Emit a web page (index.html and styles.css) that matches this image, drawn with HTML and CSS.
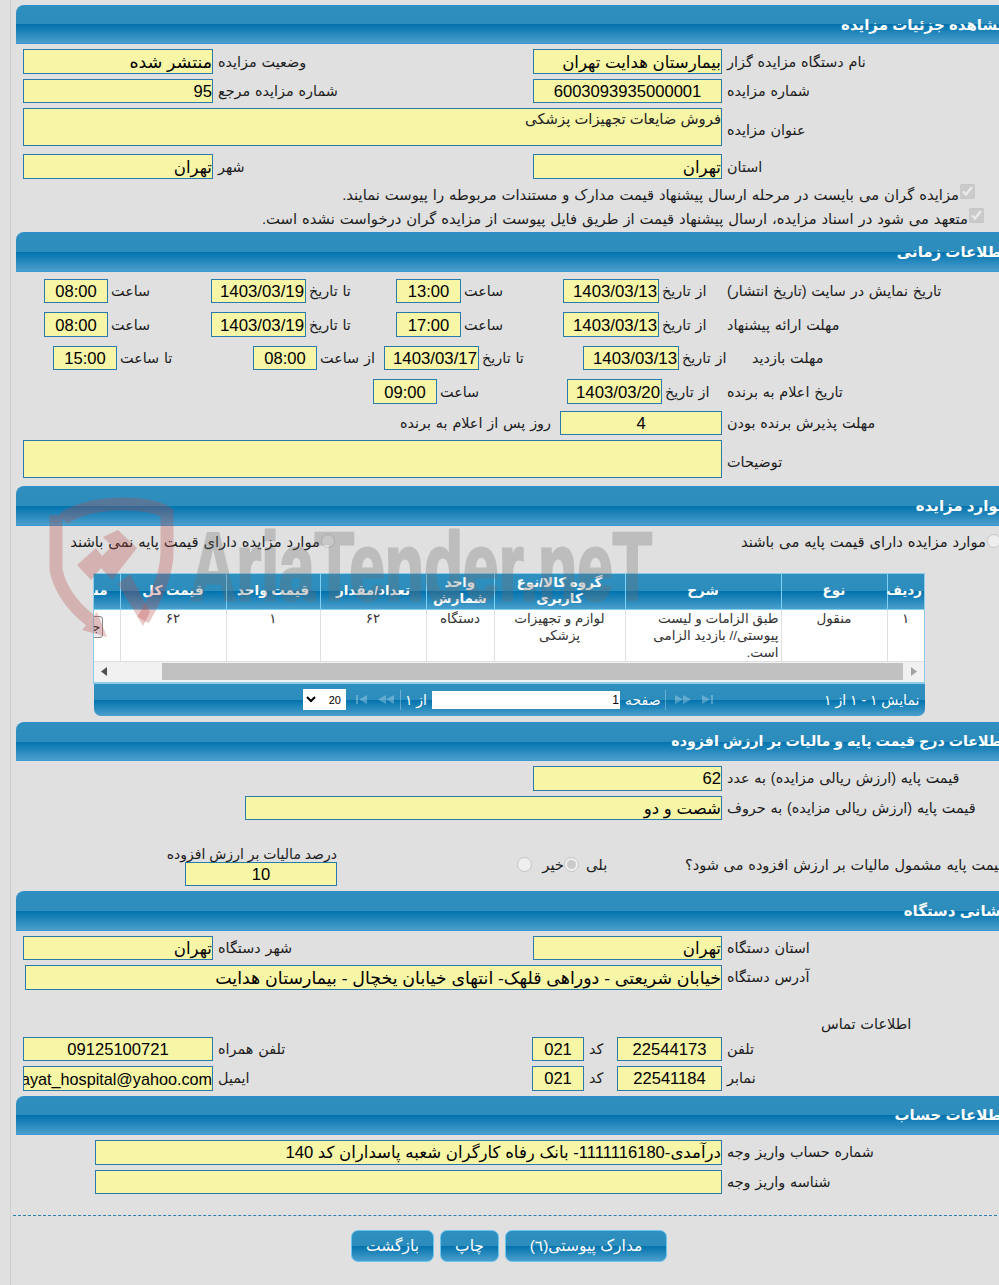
FILE: index.html
```html
<!DOCTYPE html>
<html lang="fa">
<head>
<meta charset="utf-8">
<title>مشاهده جزئیات مزایده</title>
<link rel="stylesheet" href="styles.css">
</head>
<body>
<div class="page">

  <section class="sec">
    <h2 class="bar h39">مشاهده جزئیات مزایده</h2>
    <div class="row two r25 mt5"><div class="f big">منتشر شده</div><div class="lbl">وضعیت مزایده</div><div class="f">بیمارستان هدایت تهران</div><div class="lbl">نام دستگاه مزایده گزار</div></div>
    <div class="row two r24 mt5"><div class="f">95</div><div class="lbl">شماره مزایده مرجع</div><div class="f c">6003093935000001</div><div class="lbl">شماره مزایده</div></div>
    <div class="row wide r38 mt5"><div class="f ta">فروش ضایعات تجهیزات پزشکی</div><div class="lbl low">عنوان مزایده</div></div>
    <div class="row two r25 mt8"><div class="f">تهران</div><div class="lbl">شهر</div><div class="f">تهران</div><div class="lbl">استان</div></div>
    <div class="chk one mt5"><input type="checkbox" checked disabled><span>مزایده گران می بایست در مرحله ارسال پیشنهاد قیمت مدارک و مستندات مربوطه را پیوست نمایند.</span></div>
    <div class="chk two-c mt5"><input type="checkbox" checked disabled><span>متعهد می شود در اسناد مزایده، ارسال پیشنهاد قیمت از طریق فایل پیوست از مزایده گران درخواست نشده است.</span></div>
    <div class="gap5"></div>
  </section>

  <section class="sec">
    <h2 class="bar h40">اطلاعات زمانی</h2>
    <div class="row time r24 mt7"><div class="f c">08:00</div><div class="lbl">ساعت</div><div class="f e">1403/03/19</div><div class="lbl">تا تاریخ</div><div class="f c">13:00</div><div class="lbl">ساعت</div><div class="f e">1403/03/13</div><div class="lbl">از تاریخ</div><div class="lbl">تاریخ نمایش در سایت (تاریخ انتشار)</div></div>
    <div class="row time r25 mt9"><div class="f c">08:00</div><div class="lbl">ساعت</div><div class="f e">1403/03/19</div><div class="lbl">تا تاریخ</div><div class="f c">17:00</div><div class="lbl">ساعت</div><div class="f e">1403/03/13</div><div class="lbl">از تاریخ</div><div class="lbl">مهلت ارائه پیشنهاد</div></div>
    <div class="row visit r24 mt9"><div class="f c">15:00</div><div class="lbl">تا ساعت</div><div class="f c">08:00</div><div class="lbl">از ساعت</div><div class="f e">1403/03/17</div><div class="lbl">تا تاریخ</div><div class="f e">1403/03/13</div><div class="lbl">از تاریخ</div><div class="lbl">مهلت بازدید</div></div>
    <div class="row award r25 mt9"><div class="f c">09:00</div><div class="lbl">ساعت</div><div class="f e">1403/03/20</div><div class="lbl">از تاریخ</div><div class="lbl">تاریخ اعلام به برنده</div></div>
    <div class="row accept r24 mt7"><div class="lbl after">روز پس از اعلام به برنده</div><div class="f c">4</div><div class="lbl">مهلت پذیرش برنده بودن</div></div>
    <div class="row wide r38 mt5"><div class="f"></div><div class="lbl low">توضیحات</div></div>
    <div class="gap8"></div>
  </section>

  <section class="sec">
    <h2 class="bar h40">موارد مزایده</h2>
    <div class="kinds">
      <label class="kind-l"><input type="radio" name="k" disabled><span>موارد مزایده دارای قیمت پایه نمی باشند</span></label>
      <label class="kind-r"><input type="radio" name="k" disabled><span>موارد مزایده دارای قیمت پایه می باشند</span></label>
    </div>
    <div class="grid">
      <table>
        <colgroup><col class="c1"><col class="c2"><col class="c3"><col class="c4"><col class="c5"><col class="c6"><col class="c7"><col class="c8"><col class="c9"></colgroup>
        <thead><tr><th>ردیف</th><th>نوع</th><th>شرح</th><th>گروه کالا/نوع کاربری</th><th>واحد شمارش</th><th>تعداد/مقدار</th><th>قیمت واحد</th><th>قیمت کل</th><th class="th-last">مشاهده</th></tr></thead>
        <tbody><tr><td>۱</td><td>منقول</td><td class="desc">طبق الزامات و لیست پیوستی// بازدید الزامی است.</td><td>لوازم و تجهیزات پزشکی</td><td>دستگاه</td><td>۶۲</td><td>۱</td><td>۶۲</td><td class="td-last"><button class="mini" type="button">جزئیات</button></td></tr></tbody>
      </table>
      <div class="hscroll">
        <svg class="arrow" width="9" height="11" viewBox="0 0 9 11"><path d="M7 1v9L1 5.500z" fill="#505050"/></svg>
        <div class="thumb"></div>
        <svg class="arrow" width="9" height="11" viewBox="0 0 9 11"><path d="M2 1v9l6-4.500z" fill="#a3a3a3"/></svg>
      </div>
    </div>
    <div class="pager">
      <select class="size" disabled><option>20</option></select>
      <svg class="pi first" width="13" height="9" viewBox="0 0 13 9"><path d="M1 0h2v9H1zM12 0v9L4 4.500z"/></svg>
      <svg class="pi prev" width="16" height="9" viewBox="0 0 16 9"><path d="M8 0v9L0 4.500zM16 0v9L8 4.500z"/></svg>
      <i class="sep s1"></i>
      <span class="of">از ۱</span>
      <input class="pg" type="text" value="1" readonly>
      <span class="pl">صفحه</span>
      <i class="sep s2"></i>
      <svg class="pi next" width="16" height="9" viewBox="0 0 16 9"><path d="M0 0v9l8-4.500zM8 0v9l8-4.500z"/></svg>
      <svg class="pi last" width="13" height="9" viewBox="0 0 13 9"><path d="M1 0v9l8-4.500zM10 0h2v9h-2z"/></svg>
      <span class="info">نمایش ۱ - ۱ از ۱</span>
    </div>
    <div class="gap6"></div>
  </section>

  <section class="sec">
    <h2 class="bar h39 tight">اطلاعات درج قیمت پایه و مالیات بر ارزش افزوده</h2>
    <div class="row base r25 mt5"><div class="f">62</div><div class="lbl">قیمت پایه (ارزش ریالی مزایده) به عدد</div></div>
    <div class="row words r24 mt5"><div class="f">شصت و دو</div><div class="lbl">قیمت پایه (ارزش ریالی مزایده) به حروف</div></div>
    <div class="tax">
      <div class="taxbox"><div class="taxl">درصد مالیات بر ارزش افزوده</div><div class="f c r24">10</div></div>
      <div class="yn">
        <input type="radio" name="t" disabled><span class="no">خیر</span>
        <input type="radio" name="t" checked disabled><span class="yes">بلی</span>
      </div>
      <div class="q">قیمت پایه مشمول مالیات بر ارزش افزوده می شود؟</div>
    </div>
    <div class="gap5"></div>
  </section>

  <section class="sec">
    <h2 class="bar h40">نشانی دستگاه</h2>
    <div class="row two r24 mt5"><div class="f">تهران</div><div class="lbl">شهر دستگاه</div><div class="f">تهران</div><div class="lbl">استان دستگاه</div></div>
    <div class="row addr r25 mt5"><div class="f big">خیابان شریعتی - دوراهی قلهک- انتهای خیابان یخچال - بیمارستان هدایت</div><div class="lbl">آدرس دستگاه</div></div>
    <div class="contact">اطلاعات تماس</div>
    <div class="row phone r24 mt3"><div class="f c">09125100721</div><div class="lbl">تلفن همراه</div><div class="f c">021</div><div class="lbl">کد</div><div class="f c">22544173</div><div class="lbl">تلفن</div></div>
    <div class="row phone r25 mt5"><div class="f mail">hedayat_hospital@yahoo.com</div><div class="lbl">ایمیل</div><div class="f c">021</div><div class="lbl">کد</div><div class="f c">22541184</div><div class="lbl">نمابر</div></div>
    <div class="gap5"></div>
  </section>

  <section class="sec">
    <h2 class="bar h39">اطلاعات حساب</h2>
    <div class="row acct r25 mt5"><div class="f">درآمدی-1111116180- بانک رفاه کارگران شعبه پاسداران کد 140</div><div class="lbl">شماره حساب واریز وجه</div></div>
    <div class="row acct r24 mt5"><div class="f"></div><div class="lbl">شناسه واریز وجه</div></div>
  </section>

  <div class="dash"></div>
  <div class="actions">
    <button class="btn b1" type="button">بازگشت</button>
    <button class="btn b2" type="button">چاپ</button>
    <button class="btn b3" type="button">مدارک پیوستی(٦)</button>
  </div>
</div>

<svg class="mark" width="660" height="160" viewBox="0 0 660 160" aria-hidden="true">
  <g fill="none" stroke="#b84a4a" stroke-opacity=".3" stroke-width="13">
    <path d="M63 29C90 10 150 10 167 23V62C167 85 155 110 143 130"/>
    <path d="M56 25V80C60 100 74 118 90 130"/>
  </g>
  <g fill="#b84a4a" fill-opacity=".3">
    <path d="M77 75L96 58L102 66L112 56L103 47L118 40L137 58L112 90L101 78L91 90z"/>
    <path d="M118 94L130 84L150 122L143 136z"/>
    <path d="M97 122L107 147L82 140z"/>
  </g>
  <text class="mark-t" x="190" y="110" textLength="462" lengthAdjust="spacingAndGlyphs">AriaTender.neT</text>
</svg>
</body>
</html>
```
FILE: styles.css
```css
html, body { margin: 0; padding: 0; background: #e0e0e0; }
html { overflow: hidden; height: 1285px; }
body { position: relative; height: 1285px; overflow: hidden; font-family: "Liberation Sans", "DejaVu Sans", sans-serif; font-size: 14px; color: #1c1c1c; }

.page { margin-left: 10px; width: 1000px; height: 1285px; border-left: 1px solid #cfcfcf; padding-top: 5px; box-sizing: border-box; }
.sec { margin-left: 5px; width: 991px; }

.bar, .grid thead tr, .pager, .btn { background: linear-gradient(#2f90c0 0%, #2c8cbc 50%, #0272ad 50%, #4a9fcc 100%); }
.bar { margin: 0; box-sizing: border-box; border-top: 1px solid #2d8ecb; border-bottom: 1px solid #3a99d2; border-top-left-radius: 8px; direction: rtl; color: #fff; font-size: 15px; font-weight: bold; white-space: nowrap; display: flex; align-items: center; }
.bar.tight { font-size: 14.200px; }
.h39 { height: 39px; }
.h40 { height: 40px; }

.mt3 { margin-top: 3px; }
.mt5 { margin-top: 5px; }
.mt7 { margin-top: 7px; }
.mt8 { margin-top: 8px; }
.mt9 { margin-top: 9px; }
.gap5 { height: 5px; }
.gap6 { height: 6px; }
.gap8 { height: 8px; }
.r24 { height: 24px; }
.r25 { height: 25px; }
.r38 { height: 38px; }

.row { display: grid; margin-left: 7px; align-items: center; }
.row .f { align-self: stretch; }
.two { grid-template-columns: 190px 320px 189px 1fr; }
.wide { grid-template-columns: 699px 1fr; }
.time { margin-left: 28px; grid-template-columns: 64px 103px 95px 90px 65px 102px 96px 65px 1fr; }
.visit { margin-left: 37px; grid-template-columns: 64px 136px 64px 67px 95px 104px 96px 70px 1fr; }
.award { margin-left: 357px; grid-template-columns: 64px 130px 95px 62px 1fr; }
.accept { grid-template-columns: 537px 162px 1fr; }
.base { margin-left: 517px; grid-template-columns: 189px 1fr; }
.words { margin-left: 229px; grid-template-columns: 477px 1fr; }
.addr { margin-left: 9px; grid-template-columns: 697px 1fr; }
.phone { grid-template-columns: 190px 319px 52px 33px 105px 1fr; }
.acct { margin-left: 79px; grid-template-columns: 627px 1fr; }

.f { box-sizing: border-box; border: 1px solid #2a7bac; background: #f7f5a6; direction: rtl; display: flex; align-items: center; justify-content: flex-start; padding: 2px 0 0; font-size: 16.600px; color: #000; white-space: nowrap; overflow: hidden; }
.c { justify-content: center; }
.e { justify-content: flex-start; padding-right: 1px; font-size: 16.800px; }
.big { font-size: 17.400px; }
.mail { font-size: 16.200px; }
.ta { align-items: flex-start; font-size: 14.800px; color: #222; white-space: normal; padding-top: 1px; }

.chk, .kinds, .yn { font-size: 14.800px; word-spacing: .8px; }
.lbl { font-size: 14.400px; word-spacing: .8px; direction: rtl; text-align: left; padding-left: 5px; white-space: nowrap; }
.q, .contact { font-size: 14.500px; word-spacing: .8px; }
.low { padding-top: 5px; }
.time .lbl, .visit .lbl, .award .lbl { padding-left: 3px; }
.lbl.after { text-align: right; padding: 0 9px 0 0; }

.chk { direction: rtl; display: flex; align-items: center; height: 19px; white-space: nowrap; width: 984px; }
.chk input { width: 15px; height: 15px; margin: 0 0 4px 1px; flex: none; }
.chk span { padding-top: 2px; }
.one { padding-right: 25px; box-sizing: border-box; }
.two-c { padding-right: 16px; box-sizing: border-box; }

.kinds { height: 22px; margin-top: 4px; display: grid; grid-template-columns: 54px 265px 401px 265px; }
.kind-l, .kind-r { direction: rtl; display: flex; align-items: center; white-space: nowrap; }
.kind-l { grid-column: 2; }
.kind-r { grid-column: 4; }
.kinds input { margin: 0 0 0 1px; width: 14px; height: 14px; flex: none; }

.grid { margin: 21px 0 0 77px; width: 832px; box-sizing: border-box; border: 1px solid #8ccbe9; border-bottom-width: 2px; overflow: hidden; direction: rtl; background: #fff; }
.grid table { border-collapse: collapse; table-layout: fixed; width: 844px; }
.c1 { width: 37px; }
.c2 { width: 106px; }
.c3 { width: 156px; }
.c4 { width: 131px; }
.c5 { width: 68px; }
.c6 { width: 106px; }
.c7 { width: 94px; }
.c8 { width: 106px; }
.c9 { width: 40px; }
.grid th { height: 35px; padding: 0 2px; border-left: 1px solid #7fd0f5; border-bottom: 1px solid #7fd0f5; color: #fff; font-size: 13.500px; font-weight: bold; line-height: 16px; box-sizing: border-box; }
.grid th.th-last { text-align: right; padding-right: 12px; white-space: nowrap; overflow: hidden; }
.grid td { height: 52px; vertical-align: top; padding: 0 2px; border-left: 1px solid #e0e0e0; border-bottom: 1px solid #e0e0e0; box-sizing: border-box; font-size: 13.500px; line-height: 17px; text-align: center; color: #333; background: #fff; overflow: hidden; }
.grid td.desc { text-align: right; }
.grid td.td-last { padding: 0; }
.mini { display: block; width: 40px; height: 22px; margin: 6px 17px 0 0; border: 1px solid #8a8a8a; border-radius: 3px; background: #efefef; padding: 0 1px 0 0; text-align: right; white-space: nowrap; overflow: hidden; font: 13px "Liberation Sans", "DejaVu Sans", sans-serif; color: #222; }

.hscroll { direction: ltr; height: 20px; background: #f1f1f1; display: flex; align-items: center; }
.arrow { flex: none; margin: 0 6px; }
.hscroll .arrow:first-child { margin: 0 53px 0 6px; }
.thumb { flex: 1; height: 17px; background: #c1c1c1; }

.pager { margin-left: 78px; width: 831px; height: 32px; box-sizing: border-box; border-radius: 0 0 7px 7px; display: flex; align-items: center; color: #fff; font-size: 14px; }
.size { width: 43px; height: 21px; margin-left: 209px; background: #fff; border: 1px solid #fff; direction: rtl; font: 11px "Liberation Sans", sans-serif; color: #000; opacity: 1; padding: 0; flex: none; }
.pi { fill: #fff; fill-opacity: .28; flex: none; }
.first { margin-left: 9px; }
.prev { margin-left: 10px; }
.sep { width: 1px; height: 20px; background: rgba(255, 255, 255, .3); flex: none; }
.s1 { margin-left: 6px; }
.of { margin-left: 6px; width: 20px; direction: rtl; white-space: nowrap; }
.pg { width: 188px; height: 18px; margin-left: 5px; padding: 0 1px 0 0; border: 0; background: #fff; box-sizing: border-box; direction: rtl; font: 12px "Liberation Sans", sans-serif; color: #000; flex: none; }
.pl { margin-left: 5px; width: 36px; direction: rtl; white-space: nowrap; text-align: left; }
.s2 { margin-left: 4px; }
.next { margin-left: 9px; }
.last { margin-left: 10px; }
.info { margin-left: 110px; direction: rtl; white-space: nowrap; }

.tax { margin: 26px 0 0 169px; display: flex; height: 40px; align-items: flex-end; }
.taxbox { width: 152px; flex: none; direction: rtl; }
.taxl { font-size: 14px; height: 16px; line-height: 16px; white-space: nowrap; }
.yn { margin-left: 180px; width: 168px; flex: none; display: flex; align-items: center; height: 24px; padding-bottom: 9px; }
.yn input { margin: 0; width: 15px; height: 15px; flex: none; }
.no { margin-left: 8px; width: 24px; direction: rtl; }
.yes { margin-left: 7px; direction: rtl; }
.q { direction: rtl; white-space: nowrap; height: 24px; line-height: 24px; padding-bottom: 9px; flex: none; }

.contact { margin: 24px 0 0 805px; height: 20px; line-height: 20px; direction: rtl; text-align: left; white-space: nowrap; }

.dash { margin: 21px 0 0 2px; width: 984px; border-top: 1px dashed #2d7fb0; }
.actions { margin: 14px 0 0 340px; display: flex; gap: 6px; }
.btn { height: 32px; box-sizing: border-box; border: 1px solid #6cc4ee; border-radius: 7px; color: #fff; font: 15.500px "Liberation Sans", "DejaVu Sans", sans-serif; direction: rtl; padding: 0; }
.b1 { width: 83px; }
.b2 { width: 59px; }
.b3 { width: 162px; }

.mark { position: absolute; left: 0; top: 490px; pointer-events: none; }
.mark-t { font-family: "Liberation Sans", sans-serif; font-weight: bold; font-size: 96px; fill: #6e6e6e; stroke: #6e6e6e; stroke-width: 3px; opacity: .3; }
```
